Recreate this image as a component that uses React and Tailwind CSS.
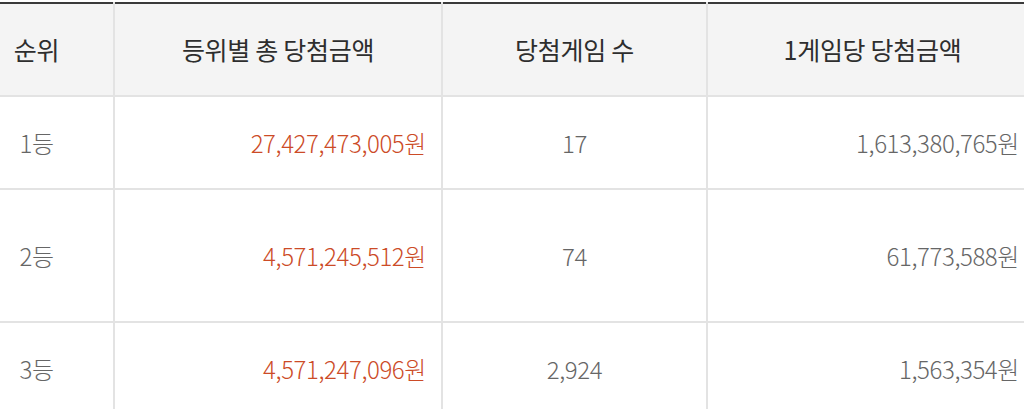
const rows = [
  { rank: '1등', total: '27,427,473,005원', games: '17', per: '1,613,380,765원', h: 'h-[93px]' },
  { rank: '2등', total: '4,571,245,512원', games: '74', per: '61,773,588원', h: 'h-[133px]' },
  { rank: '3등', total: '4,571,247,096원', games: '2,924', per: '1,563,354원', h: 'h-[93px]' },
]

export default function App() {
  return (
    <div className="w-[1024px] h-[409px] overflow-hidden bg-white pt-[2px] font-['Noto_Sans_CJK_KR','Noto_Sans',sans-serif]">
      <table className="w-[1037px] table-fixed border-collapse border-t-2 border-[#3a3a3a]">
        <colgroup>
          <col className="w-[114px]" />
          <col className="w-[328px]" />
          <col className="w-[265px]" />
          <col className="w-[330px]" />
        </colgroup>
        <thead>
          <tr className="h-[93px] bg-[#f4f4f4] text-[25px] tracking-[-0.3px] text-[#2e2e2e]">
            <th className="pr-[40px] text-center font-normal border-b-2 border-r-2 border-[#e3e3e3]">순위</th>
            <th className="text-center font-normal border-b-2 border-r-2 border-[#e3e3e3]">등위별 총 당첨금액</th>
            <th className="text-center font-normal border-b-2 border-r-2 border-[#e3e3e3]">당첨게임 수</th>
            <th className="text-center font-normal border-b-2 border-[#e3e3e3]">1게임당 당첨금액</th>
          </tr>
        </thead>
        <tbody>
          {rows.map(r => (
            <tr key={r.rank} className={`${r.h} text-[24px] tracking-[-0.4px] font-light text-[#666]`}>
              <td className="pr-[40px] text-center border-b-2 border-r-2 border-[#e3e3e3]">{r.rank}</td>
              <td className="pr-[15px] text-right text-[#cc4b27] border-b-2 border-r-2 border-[#e3e3e3]">{r.total}</td>
              <td className="text-center border-b-2 border-r-2 border-[#e3e3e3]">{r.games}</td>
              <td className="pr-[18px] text-right border-b-2 border-[#e3e3e3]">{r.per}</td>
            </tr>
          ))}
        </tbody>
      </table>
    </div>
  )
}
